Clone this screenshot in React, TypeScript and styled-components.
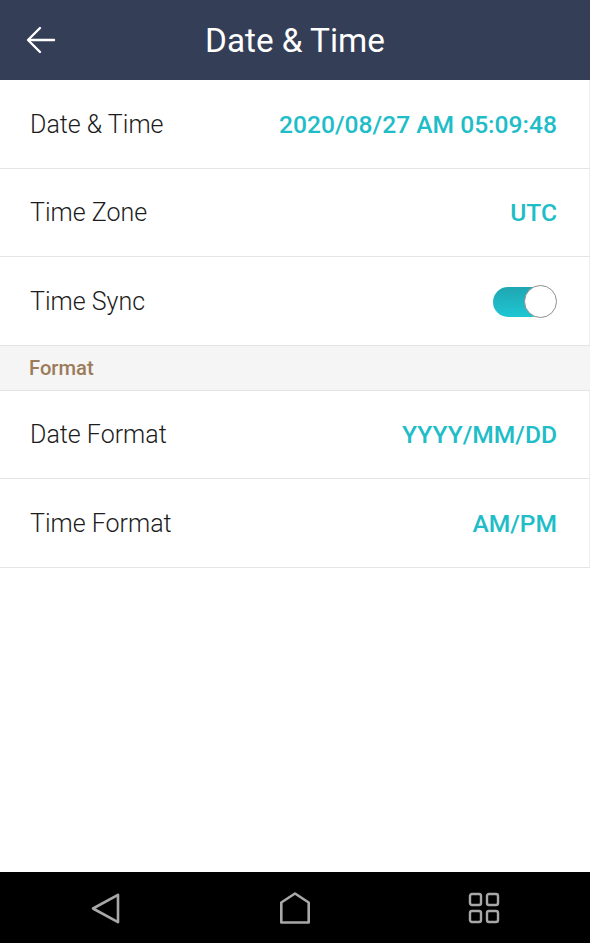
import React from "react";
import styled, { createGlobalStyle } from "styled-components";

const Global = createGlobalStyle`
  html, body { margin: 0; padding: 0; background: #fff; }
  body { font-family: Roboto, "Noto Sans", sans-serif; }
  * { box-sizing: border-box; }
`;

const Screen = styled.div`
  width: 590px;
  height: 943px;
  display: flex;
  flex-direction: column;
  background: #fff;
  overflow: hidden;
`;

const Header = styled.header`
  height: 80px;
  flex: none;
  background: #353e57;
  display: grid;
  grid-template-columns: 80px 1fr 80px;
  align-items: center;
`;

const BackButton = styled.div`
  display: flex;
  align-items: center;
  padding-left: 26px;
  height: 100%;
`;

const Title = styled.h1`
  margin: 0;
  text-align: center;
  color: #fff;
  font-size: 33.3px;
  font-weight: 400;
`;

const Content = styled.main`
  flex: 1;
  display: flex;
  flex-direction: column;
`;

const Row = styled.div`
  height: 88.5px;
  display: flex;
  align-items: center;
  justify-content: space-between;
  padding: 1px 32px 0 30px;
  border-bottom: 1px solid #e4e4e4;
  border-right: 1px solid #eeeeee;
`;

const Label = styled.span`
  font-size: 25px;
  font-weight: 300;
  color: #1c1c1c;
`;

const Value = styled.span`
  font-size: 24.6px;
  font-weight: 500;
  color: #1ebdc8;
`;

const Section = styled.div`
  height: 45px;
  display: flex;
  align-items: center;
  padding-left: 29px;
  background: #f5f5f5;
  border-bottom: 1px solid #e4e4e4;
  font-size: 20.2px;
  font-weight: 500;
  color: #9c7b5a;
`;

const Toggle = styled.div`
  position: relative;
  width: 64px;
  height: 33px;
  margin-right: 0;
`;

const Track = styled.div`
  position: absolute;
  left: 0;
  top: 2px;
  width: 54px;
  height: 30px;
  border-radius: 15px;
  background: linear-gradient(180deg, #1fa6b2 0%, #1ec7d3 100%);
`;

const Knob = styled.div`
  position: absolute;
  right: 0;
  top: 0;
  width: 33px;
  height: 33px;
  border-radius: 50%;
  background: #fff;
  border: 1px solid #8f8f8f;
`;

const NavBar = styled.nav`
  height: 71px;
  flex: none;
  background: #000;
  display: grid;
  grid-template-columns: repeat(3, 1fr);
  align-items: center;
  justify-items: center;
`;

const NavIcon = styled.div<{ $shift: number }>`
  display: flex;
  transform: translateX(${(p) => p.$shift}px);
`;

const rows1 = [
  { label: "Date & Time", value: "2020/08/27 AM 05:09:48" },
  { label: "Time Zone", value: "UTC" },
];

const rows2 = [
  { label: "Date Format", value: "YYYY/MM/DD" },
  { label: "Time Format", value: "AM/PM" },
];

export default function App() {
  return (
    <Screen>
      <Global />
      <Header>
        <BackButton>
          <svg width="30" height="28" viewBox="0 0 30 28" fill="none" stroke="#fff" strokeWidth="2.4" strokeLinecap="round" strokeLinejoin="round">
            <path d="M28 14H3" />
            <path d="M14 2L2 14l12 12" />
          </svg>
        </BackButton>
        <Title>Date &amp; Time</Title>
        <div />
      </Header>
      <Content>
        {rows1.map((r) => (
          <Row key={r.label}>
            <Label>{r.label}</Label>
            <Value>{r.value}</Value>
          </Row>
        ))}
        <Row>
          <Label>Time Sync</Label>
          <Toggle>
            <Track />
            <Knob />
          </Toggle>
        </Row>
        <Section>Format</Section>
        {rows2.map((r) => (
          <Row key={r.label}>
            <Label>{r.label}</Label>
            <Value>{r.value}</Value>
          </Row>
        ))}
      </Content>
      <NavBar>
        <NavIcon $shift={8}>
          <svg width="32" height="34" viewBox="0 0 32 34" fill="none" stroke="#a8a8a8" strokeWidth="2.6" strokeLinejoin="round" strokeLinecap="round">
            <path d="M28 3.8L3 17.5l25 13.7z" />
          </svg>
        </NavIcon>
        <NavIcon $shift={0}>
          <svg width="32" height="34" viewBox="0 0 32 34" fill="none" stroke="#a8a8a8" strokeWidth="2.6" strokeLinejoin="round">
            <path d="M16 2.5L2.3 11.5v20h27.4v-20z" />
          </svg>
        </NavIcon>
        <NavIcon $shift={-8}>
          <svg width="32" height="32" viewBox="0 0 32 32" fill="none" stroke="#a8a8a8" strokeWidth="2.4">
            <rect x="2" y="2" width="11" height="11" rx="2" />
            <rect x="19" y="2" width="11" height="11" rx="2" />
            <rect x="2" y="19" width="11" height="11" rx="2" />
            <rect x="19" y="19" width="11" height="11" rx="2" />
          </svg>
        </NavIcon>
      </NavBar>
    </Screen>
  );
}
